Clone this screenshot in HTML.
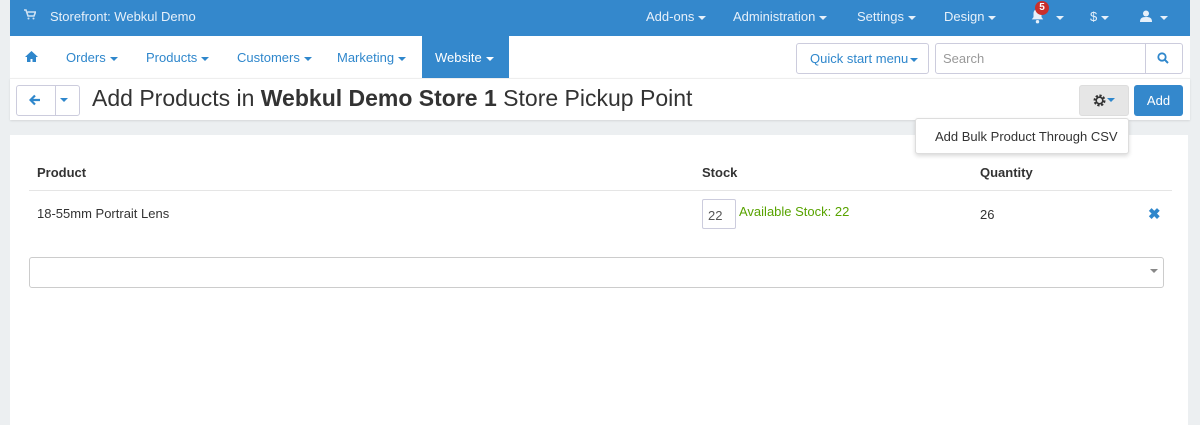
<!DOCTYPE html>
<html><head><meta charset="utf-8"><style>
*{margin:0;padding:0;box-sizing:border-box}
body{width:1200px;height:417px;background:#eceff1;font-family:"Liberation Sans",sans-serif;font-size:13px;color:#333;position:relative;overflow:hidden}
.a{position:absolute}
.top{left:10px;top:0;width:1180px;height:36px;background:#3488cc;color:#e6f0fa}
.top span{position:absolute;top:9px;font-size:13px}
.car{display:inline-block;width:0;height:0;border-left:4px solid transparent;border-right:4px solid transparent;border-top:4px solid currentColor;vertical-align:middle;margin-left:4px}
.nav{left:10px;top:36px;width:1180px;height:42px;background:#fff;color:#2f87cc}
.nav span{position:absolute;top:14px}
.title{left:10px;top:78px;width:1180px;height:42px;background:#fff;border-top:1px solid #eee;box-shadow:0 1px 2px rgba(0,0,0,.1)}
.panel{left:10px;top:135px;width:1178px;height:290px;background:#fff}
.btn{position:absolute;border:1px solid #ccd;border-radius:3px;background:#fff}
</style></head><body>
<div class="a top">
<svg class="a" style="left:14px;top:9px" width="12" height="11" viewBox="0 0 12 11"><path d="M0 1h2l2 6h6l1.5-4H3.5" fill="none" stroke="#cfe2f3" stroke-width="1.6"/><circle cx="4.5" cy="9.5" r="1" fill="#cfe2f3"/><circle cx="9.5" cy="9.5" r="1" fill="#cfe2f3"/></svg>
<span style="left:40px">Storefront: Webkul Demo</span>
<span style="left:636px">Add-ons<i class="car"></i></span>
<span style="left:723px">Administration<i class="car"></i></span>
<span style="left:847px">Settings<i class="car"></i></span>
<span style="left:934px">Design<i class="car"></i></span>
<svg class="a" style="left:1020px;top:8px" width="15" height="16" viewBox="0 0 13 14"><path d="M6.5 1C4 1 3 3 3 5v3L1.5 10h10L10 8V5c0-2-1-4-3.5-4z" fill="#e6f0fa"/><circle cx="6.5" cy="12" r="1.5" fill="#e6f0fa"/></svg>
<div class="a" style="left:1025px;top:1px;width:14px;height:14px;border-radius:7px;background:#c9302c;color:#fff;font-size:10px;font-weight:bold;text-align:center;line-height:14px">5</div>
<span style="left:1042px"><i class="car"></i></span>
<span style="left:1080px">$<i class="car"></i></span>
<svg class="a" style="left:1130px;top:10px" width="12" height="12" viewBox="0 0 12 12"><circle cx="6" cy="3.5" r="3" fill="#e6f0fa"/><path d="M0 12c0-4 2-5 6-5s6 1 6 5z" fill="#e6f0fa"/></svg>
<span style="left:1146px"><i class="car"></i></span>
</div>
<div class="a nav">
<svg class="a" style="left:15px;top:15px" width="13" height="11" viewBox="0 0 13 11"><path d="M6.5 0L0 6h2v5h3.5V8h2v3H11V6h2z" fill="#2f87cc"/></svg>
<span style="left:56px">Orders<i class="car"></i></span>
<span style="left:136px">Products<i class="car"></i></span>
<span style="left:227px">Customers<i class="car"></i></span>
<span style="left:327px">Marketing<i class="car"></i></span>
<div class="a" style="left:412px;top:0;width:87px;height:42px;background:#3488cc"></div>
<span style="left:425px;color:#fff">Website<i class="car"></i></span>
<div class="btn" style="left:786px;top:7px;width:133px;height:31px;color:#2f87cc;padding:7px 0 0 13px">Quick start menu<i class="car" style="margin-left:2px"></i></div>
<div class="btn" style="left:925px;top:7px;width:248px;height:31px;color:#999;padding:7px 0 0 7px">Search</div>
<div class="a" style="left:1135px;top:8px;width:1px;height:29px;background:#ccd"></div>
<svg class="a" style="left:1147px;top:16px" width="12" height="12" viewBox="0 0 12 12"><circle cx="5" cy="5" r="3.7" fill="none" stroke="#2f87cc" stroke-width="1.8"/><path d="M7.7 7.7L11 11" stroke="#2f87cc" stroke-width="2"/></svg>
</div>
<div class="a title">
<div class="btn" style="left:6px;top:6px;width:64px;height:31px"></div>
<div class="a" style="left:45px;top:7px;width:1px;height:29px;background:#ccd"></div>
<svg class="a" style="left:19px;top:15px" width="12" height="12" viewBox="0 0 12 12"><path d="M11 6H2M6 1.5L1.5 6 6 10.5" fill="none" stroke="#2f87cc" stroke-width="2.2"/></svg>
<i class="a car" style="left:50px;top:19px;color:#2f87cc;margin:0"></i>
<div class="a" style="left:82px;top:6px;font-size:23px;color:#333;white-space:nowrap">Add Products in <b>Webkul Demo Store 1</b> Store Pickup Point</div>
<div class="a" style="left:1069px;top:6px;width:50px;height:31px;background:#e6e6e6;border:1px solid #ddd;border-radius:3px"></div>
<svg class="a" style="left:1083px;top:15px" width="13" height="13" viewBox="0 0 13 13"><circle cx="6.5" cy="6.5" r="4.5" fill="none" stroke="#333" stroke-width="3" stroke-dasharray="2 1.5"/><circle cx="6.5" cy="6.5" r="3.3" fill="none" stroke="#333" stroke-width="1.6"/></svg>
<i class="a car" style="left:1097px;top:19px;color:#2f87cc;margin:0"></i>
<div class="a" style="left:1124px;top:6px;width:49px;height:31px;background:#3488cc;border-radius:3px;color:#fff;text-align:center;line-height:31px">Add</div>
</div>
<div class="a panel">
<div class="a" style="left:27px;top:30px;font-weight:bold">Product</div>
<div class="a" style="left:692px;top:30px;font-weight:bold">Stock</div>
<div class="a" style="left:970px;top:30px;font-weight:bold">Quantity</div>
<div class="a" style="left:19px;top:55px;width:1143px;height:1px;background:#e5e5e5"></div>
<div class="a" style="left:27px;top:71px">18-55mm Portrait Lens</div>
<div class="a" style="left:692px;top:64px;width:34px;height:30px;border:1px solid #ccd;border-radius:2px;color:#555;padding:8px 0 0 5px">22</div>
<div class="a" style="left:729px;top:69px;color:#58a300">Available Stock: 22</div>
<div class="a" style="left:970px;top:72px">26</div>
<div class="a" style="left:1138px;top:70px;color:#2f87cc;font-weight:bold;font-size:15px">✖</div>
<div class="a" style="left:19px;top:122px;width:1135px;height:31px;border:1px solid #ccc;border-radius:3px"></div>
<i class="a car" style="left:1140px;top:134px;color:#888;margin:0"></i>
</div>
<div class="a" style="left:915px;top:118px;width:214px;height:36px;background:#fff;border:1px solid #ddd;border-radius:3px;box-shadow:0 2px 4px rgba(0,0,0,.15);padding:10px 0 0 19px;color:#333">Add Bulk Product Through CSV</div>
</body></html>
